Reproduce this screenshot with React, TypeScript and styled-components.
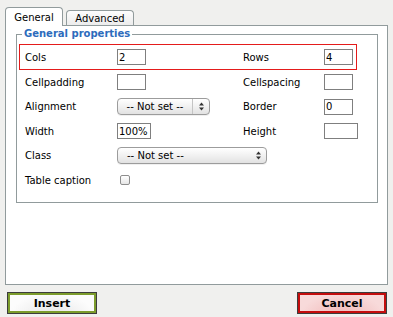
import React from 'react';
import styled, { createGlobalStyle, css } from 'styled-components';

const GlobalStyle = createGlobalStyle`
  html, body {
    margin: 0;
    padding: 0;
    background: #f0f0ee;
  }
  body {
    font-family: "DejaVu Sans", Verdana, sans-serif;
    font-size: 10px;
    color: #000;
  }
`;

const SelectArrows = () => (
  <svg width="5" height="9" viewBox="0 0 5 9">
    <path d="M2.5 0.5 L5 3.5 L0 3.5 Z" fill="#333" />
    <path d="M2.5 8.5 L5 5.5 L0 5.5 Z" fill="#333" />
  </svg>
);

const App = () => {
  return (
    <Page>
      <GlobalStyle />
      <Tabs>
        <Tab active>General</Tab>
        <Tab>Advanced</Tab>
      </Tabs>

      <Panel>
        <Fieldset>
          <Legend>General properties</Legend>

          <Row highlight>
            <Label>Cols</Label>
            <TextInput defaultValue="2" />
            <Label>Rows</Label>
            <TextInput defaultValue="4" />
          </Row>
          <Row>
            <Label>Cellpadding</Label>
            <TextInput />
            <Label>Cellspacing</Label>
            <TextInput />
          </Row>
          <Row>
            <Label>Alignment</Label>
            <Select width={93}>
              <SelectText>-- Not set --</SelectText>
              <SelectButton divider>
                <SelectArrows />
              </SelectButton>
            </Select>
            <Label>Border</Label>
            <TextInput defaultValue="0" />
          </Row>
          <Row>
            <Label>Width</Label>
            <TextInput wide defaultValue="100%" />
            <Label>Height</Label>
            <TextInput wide />
          </Row>
          <Row>
            <Label>Class</Label>
            <Select width={150}>
              <SelectText left>-- Not set --</SelectText>
              <SelectButton>
                <SelectArrows />
              </SelectButton>
            </Select>
          </Row>
          <Row>
            <Label>Table caption</Label>
            <Checkbox />
          </Row>
        </Fieldset>
      </Panel>

      <Footer>
        <ActionButton kind="insert">Insert</ActionButton>
        <ActionButton kind="cancel">Cancel</ActionButton>
      </Footer>
    </Page>
  );
};

const Page = styled.div`
  width: 383px;
  padding: 7px 5px 0 5px;
`;

const Tabs = styled.div`
  display: flex;
  align-items: flex-end;
  gap: 3px;
  height: 19px;
  margin-bottom: -1px;
`;

const Tab = styled.div<{ active?: boolean }>`
  box-sizing: border-box;
  border: 1px solid #919b9c;
  border-bottom: none;
  border-radius: 4px 4px 0 0;
  text-align: center;
  line-height: 14px;

  ${({ active }) =>
    active
      ? css`
          width: 58px;
          height: 19px;
          padding-top: 3px;
          background: #fff;
        `
      : css`
          width: 68px;
          height: 15px;
          margin-bottom: 1px;
          padding-top: 1px;
          background: linear-gradient(#fdfdfd, #ececec);
        `}
`;

const Panel = styled.div`
  box-sizing: border-box;
  height: 260px;
  background: #fff;
  border: 1px solid #919b9c;
  padding: 2px 9px 0 10px;
`;

const Fieldset = styled.fieldset`
  margin: 0;
  padding: 4px 2px 9px 2px;
  border: 1px solid #919b9c;
  min-width: 0;
`;

const Legend = styled.legend`
  margin-left: 3px;
  padding: 0 2px;
  color: #2d6cbc;
  font-weight: bold;
  line-height: 12px;
`;

const Row = styled.div<{ highlight?: boolean }>`
  box-sizing: border-box;
  display: grid;
  grid-template-columns: 92px 126px 81px auto;
  align-items: center;
  width: 338px;
  padding-left: 5px;
  ${({ highlight }) =>
    highlight
      ? css`
          height: 26px;
          border: 1px solid #e41b1b;
        `
      : css`
          height: 24.5px;
          padding-left: 6px;
        `}
`;

const Label = styled.span`
  white-space: nowrap;
`;

const TextInput = styled.input<{ wide?: boolean }>`
  box-sizing: border-box;
  width: ${({ wide }) => (wide ? '34px' : '29px')};
  height: 16px;
  margin: 0;
  padding: 0 1px;
  border: 1px solid #7f7f7f;
  background: #fff;
  font-family: "DejaVu Sans", Verdana, sans-serif;
  font-size: 10px;
  color: #000;
  outline: none;
`;

const Select = styled.div<{ width: number }>`
  box-sizing: border-box;
  display: flex;
  align-items: stretch;
  width: ${({ width }) => width}px;
  height: 17px;
  border: 1px solid #9c9c9c;
  border-radius: 4px;
  background: linear-gradient(#ffffff, #f1f1f1 50%, #e2e2e2);
  box-shadow: 0 1px 0 rgba(0, 0, 0, 0.06);
`;

const SelectText = styled.span<{ left?: boolean }>`
  flex: 1;
  display: flex;
  align-items: center;
  justify-content: ${({ left }) => (left ? 'flex-start' : 'center')};
  padding-left: ${({ left }) => (left ? '9px' : '0')};
  white-space: nowrap;
  line-height: 15px;
`;

const SelectButton = styled.span<{ divider?: boolean }>`
  display: flex;
  align-items: center;
  justify-content: center;
  width: 16px;
  border-left: ${({ divider }) => (divider ? '1px solid #c4c4c4' : 'none')};
`;

const Checkbox = styled.span`
  box-sizing: border-box;
  display: block;
  width: 10px;
  height: 10px;
  margin-left: 3px;
  border: 1px solid #8e8e8e;
  border-radius: 2px;
  background: linear-gradient(#ffffff, #e6e6e6);
`;

const Footer = styled.div`
  display: flex;
  justify-content: space-between;
  margin-top: 7px;
  padding: 0 1px 0 2px;
`;

const ActionButton = styled.button<{ kind: 'insert' | 'cancel' }>`
  box-sizing: border-box;
  width: 90px;
  height: 22px;
  margin: 0;
  padding: 0;
  border: 1px solid #3c3c3c;
  font-family: "DejaVu Sans", Verdana, sans-serif;
  font-size: 11px;
  font-weight: bold;
  color: #000;
  ${({ kind }) =>
    kind === 'insert'
      ? css`
          box-shadow: inset 0 0 0 2px #7c9c2c;
          background: radial-gradient(ellipse at 50% 130%, #e4e4e4 0%, #f3f3f3 45%, #fcfcfc 70%);
        `
      : css`
          box-shadow: inset 0 0 0 2px #c40d0d;
          background: radial-gradient(ellipse at 50% 130%, #eeb5b5 0%, #f5cccc 45%, #f8dada 70%);
        `}
`;

export default App;
